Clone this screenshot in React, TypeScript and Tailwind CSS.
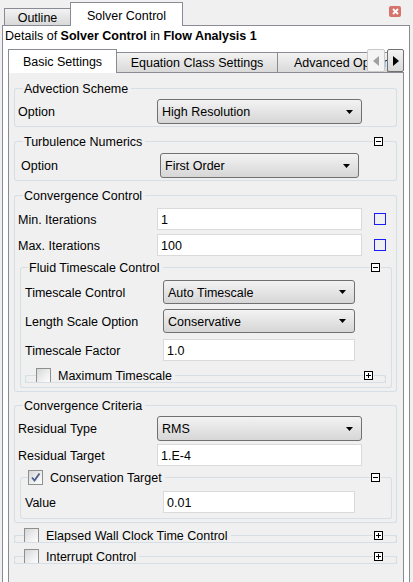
import { ReactNode } from 'react';
import clsx from 'clsx';

const LINE = 'border-[#d5dfe5]';

const ToggleIcon = ({ open }: { open: boolean }) => (
  <svg width="9" height="9" viewBox="0 0 9 9" className="mx-[1px] shrink-0">
    <rect x="0.5" y="0.5" width="8" height="8" fill="#fff" stroke="#000" />
    <path d="M2 4.5H7" stroke="#000" />
    {!open && <path d="M4.5 2V7" stroke="#000" />}
  </svg>
);

const CheckBox = ({ checked }: { checked?: boolean }) => (
  <div className="flex h-[15px] w-[15px] shrink-0 items-center justify-center border border-[#8e8f8f] bg-linear-to-br from-[#d6d6d6] via-[#ececec] to-[#fdfdfd]">
    {checked && (
      <svg width="11" height="11" viewBox="0 0 11 11">
        <path d="M2 5.5L4.5 8.5L9.5 1.5" fill="none" stroke="#4a5d8c" strokeWidth="1.8" />
      </svg>
    )}
  </div>
);

const Select = ({ value, className }: { value: string; className: string }) => (
  <div
    className={clsx(
      'flex shrink-0 items-center justify-between rounded-[3px] border border-[#707070] bg-linear-to-b from-[#f3f3f3] to-[#d6d6d6] pl-[4px] pr-[8px]',
      className,
    )}
  >
    <span className="pt-[2px]">{value}</span>
    <svg width="7" height="4" viewBox="0 0 7 4">
      <polygon points="0,0 7,0 3.5,4" fill="#000" />
    </svg>
  </div>
);

const Field = ({ value, className }: { value: string; className: string }) => (
  <div className={clsx('flex shrink-0 items-center border border-[#dadada] bg-white pl-[3px]', className)}>
    <span className="pt-[2px]">{value}</span>
  </div>
);

const Row = ({
  label,
  labelW,
  className,
  children,
}: {
  label: string;
  labelW: string;
  className?: string;
  children: ReactNode;
}) => (
  <div className={clsx('flex items-center', className)}>
    <span className={clsx('shrink-0 pt-[2px]', labelW)}>{label}</span>
    {children}
  </div>
);

interface GroupProps {
  title: string;
  check?: 'on' | 'off';
  icon?: 'minus' | 'plus';
  leftW: string;
  rightW?: string;
  collapsed?: boolean;
  className?: string;
  bodyClass?: string;
  children?: ReactNode;
}

const Group = ({ title, check, icon, leftW, rightW, collapsed, className, bodyClass, children }: GroupProps) => (
  <div className={clsx('flex flex-col', className)}>
    <div className="flex h-[15px] items-center whitespace-nowrap">
      <div className={clsx('h-[8px] shrink-0 self-end rounded-tl-[3px] border-l border-t', LINE, leftW)} />
      {check && <CheckBox checked={check === 'on'} />}
      <span className={clsx('pt-[2px]', check ? 'pl-[7px] pr-[3px]' : 'pl-[1px] pr-[3px]')}>{title}</span>
      <div
        className={clsx(
          'h-[8px] flex-1 self-end border-t',
          LINE,
          !icon && 'rounded-tr-[3px] border-r',
        )}
      />
      {icon && (
        <>
          <ToggleIcon open={icon === 'minus'} />
          <div className={clsx('h-[8px] shrink-0 self-end rounded-tr-[3px] border-r border-t', LINE, rightW)} />
        </>
      )}
    </div>
    {collapsed ? (
      <div className={clsx('-mt-[8px] h-[8px] rounded-b-[3px] border-x border-b', LINE)} />
    ) : (
      <div className={clsx('rounded-b-[3px] border-x border-b', LINE, bodyClass)}>{children}</div>
    )}
  </div>
);

const BlueBox = () => <div className="ml-[12px] h-[12px] w-[12px] shrink-0 border border-[#1c1cff]" />;

export default function App() {
  return (
    <div className="h-[582px] w-[413px] overflow-hidden bg-[#f0f0f0] font-['Liberation_Sans',Arial,sans-serif] text-[12.5px] leading-[15px] text-black">
      {/* outer tabs */}
      <div className="flex h-[25px] items-end pl-[4px]">
        <div className="flex h-[17px] w-[67px] items-center justify-center border border-b-0 border-[#898c95] bg-linear-to-b from-[#f3f3f3] to-[#d9d9d9] pt-[2px]">
          Outline
        </div>
        <div className="relative z-10 -mb-px -ml-px flex h-[24px] w-[113px] justify-center border border-b-0 border-[#898c95] bg-white pt-[6px]">
          Solver Control
        </div>
        <div className="mr-[12px] ml-auto mt-[6px] flex h-[11px] w-[12px] items-center justify-center self-start rounded-[2px] bg-[#d6736c]">
          <svg width="7" height="7" viewBox="0 0 7 7">
            <path d="M1 1L6 6M6 1L1 6" stroke="#fff" strokeWidth="1.8" />
          </svg>
        </div>
      </div>

      <div className="ml-[2px] h-[560px] w-[408px] border border-[#898c95] bg-white">
        <div className="h-[23px] pl-[2px] pt-[3px]">
          Details of <span className="font-bold">Solver Control</span> in{' '}
          <span className="font-bold">Flow Analysis 1</span>
        </div>

        {/* inner tabs */}
        <div className="relative ml-[5px] flex h-[23px] w-[396px] items-end">
          <div className="relative z-10 -mb-px flex h-[24px] w-[109px] justify-center border border-b-0 border-[#898c95] bg-white pt-[5px]">
            Basic Settings
          </div>
          <div className="flex h-[20px] w-[161px] items-center justify-center border border-b-0 border-l-0 border-[#898c95] bg-linear-to-b from-[#f3f3f3] to-[#d9d9d9] pt-[2px]">
            Equation Class Settings
          </div>
          <div className="flex h-[20px] w-[110px] items-center overflow-hidden whitespace-nowrap border border-b-0 border-l-0 border-[#898c95] bg-linear-to-b from-[#f3f3f3] to-[#d9d9d9] pl-[16px] pt-[2px]">
            Advanced Options
          </div>
          <div className="absolute bottom-0 right-0 flex gap-[2px]">
            <div className="flex h-[23px] w-[18px] items-center justify-center rounded-[2px] border border-[#c9c9c9] bg-[#f4f4f4]">
              <svg width="6" height="10" viewBox="0 0 6 10">
                <polygon points="6,0 6,10 0,5" fill="#a0a0a0" />
              </svg>
            </div>
            <div className="flex h-[23px] w-[17px] items-center justify-center rounded-[2px] border border-[#707070] bg-linear-to-b from-[#f3f3f3] to-[#d9d9d9]">
              <svg width="6" height="10" viewBox="0 0 6 10">
                <polygon points="0,0 0,10 6,5" fill="#000" />
              </svg>
            </div>
          </div>
        </div>

        {/* content */}
        <div className="ml-[5px] h-[520px] w-[396px] border border-[#898c95] bg-[#f0f0f0] pl-[5px] pr-[6px] pt-[8px]">
          <Group title="Advection Scheme" leftW="w-[9px]" bodyClass="pl-[3px] pt-[3px] pb-[2px]">
            <Row label="Option" labelW="w-[139px]">
              <Select value="High Resolution" className="h-[25px] w-[205px]" />
            </Row>
          </Group>

          <Group
            title="Turbulence Numerics"
            icon="minus"
            leftW="w-[9px]"
            rightW="w-[13px]"
            className="mt-[7px]"
            bodyClass="pl-[6px] pt-[4px] pb-[2px]"
          >
            <Row label="Option" labelW="w-[139px]">
              <Select value="First Order" className="h-[25px] w-[199px]" />
            </Row>
          </Group>

          <Group
            title="Convergence Control"
            leftW="w-[9px]"
            className="mt-[7px]"
            bodyClass="pl-[3px] pr-[4px] pt-[5px] pb-[3px]"
          >
            <Row label="Min. Iterations" labelW="w-[139px]">
              <Field value="1" className="h-[22px] w-[205px]" />
              <BlueBox />
            </Row>
            <Row label="Max. Iterations" labelW="w-[139px]" className="mt-[4px]">
              <Field value="100" className="h-[22px] w-[205px]" />
              <BlueBox />
            </Row>

            <Group
              title="Fluid Timescale Control"
              icon="minus"
              leftW="w-[8px]"
              rightW="w-[11px]"
              className="ml-[2px] mt-[4px]"
              bodyClass="pl-[4px] pr-[5px] pt-[5px] pb-[4px]"
            >
              <Row label="Timescale Control" labelW="w-[138px]">
                <Select value="Auto Timescale" className="h-[24px] w-[192px]" />
              </Row>
              <Row label="Length Scale Option" labelW="w-[138px]" className="mt-[5px]">
                <Select value="Conservative" className="h-[24px] w-[192px]" />
              </Row>
              <Row label="Timescale Factor" labelW="w-[138px]" className="mt-[6px]">
                <Field value="1.0" className="h-[22px] w-[192px]" />
              </Row>
              <Group
                title="Maximum Timescale"
                check="off"
                icon="plus"
                leftW="w-[11px]"
                rightW="w-[12px]"
                collapsed
                className="mt-[7px]"
              />
            </Group>
          </Group>

          <Group
            title="Convergence Criteria"
            leftW="w-[9px]"
            className="mt-[6px]"
            bodyClass="pl-[3px] pr-[4px] pt-[3px] pb-[3px]"
          >
            <Row label="Residual Type" labelW="w-[139px]">
              <Select value="RMS" className="h-[25px] w-[205px]" />
            </Row>
            <Row label="Residual Target" labelW="w-[139px]" className="mt-[3px]">
              <Field value="1.E-4" className="h-[22px] w-[205px]" />
            </Row>
            <Group
              title="Conservation Target"
              check="on"
              icon="minus"
              leftW="w-[8px]"
              rightW="w-[11px]"
              className="ml-[2px] mt-[4px]"
              bodyClass="pl-[4px] pr-[5px] pt-[6px] pb-[5px]"
            >
              <Row label="Value" labelW="w-[138px]">
                <Field value="0.01" className="h-[22px] w-[192px]" />
              </Row>
            </Group>
          </Group>

          <Group
            title="Elapsed Wall Clock Time Control"
            check="off"
            icon="plus"
            leftW="w-[10px]"
            rightW="w-[13px]"
            collapsed
            className="mt-[5px]"
          />
          <Group
            title="Interrupt Control"
            check="off"
            icon="plus"
            leftW="w-[10px]"
            rightW="w-[13px]"
            collapsed
            className="mt-[6px]"
          />
        </div>
      </div>
    </div>
  );
}
